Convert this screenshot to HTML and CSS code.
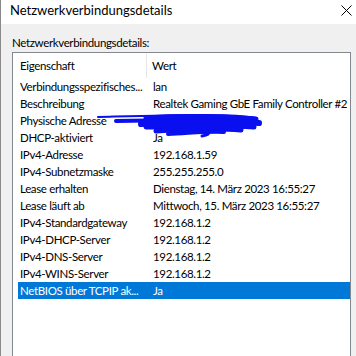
FILE: index.html
```html
<!DOCTYPE html>
<html lang="de">
<head>
<meta charset="UTF-8">
<title>Netzwerkverbindungsdetails</title>
<link rel="stylesheet" href="styles.css">
</head>
<body>
<div class="window">
    <div class="titlebar">
        <span class="title">Netzwerkverbindungsdetails</span>
        <svg class="close" width="11" height="11" viewBox="0 0 11 11">
            <path d="M0.5 0.5 L10.5 10.5 M10.5 0.5 L0.5 10.5" stroke="#000" stroke-width="1" fill="none"/>
        </svg>
    </div>

    <div class="content">
        <div class="label">Netzwerkverbindungsdetails:</div>

        <div class="listview">
            <div class="header">
                <div class="col1">Eigenschaft</div>
                <div class="col2">Wert</div>
            </div>
            <div class="row"><div class="col1">Verbindungsspezifisches...</div><div class="col2">lan</div></div>
            <div class="row"><div class="col1">Beschreibung</div><div class="col2">Realtek Gaming GbE Family Controller #2</div></div>
            <div class="row"><div class="col1">Physische Adresse</div><div class="col2">00-00-00-00-00-00</div></div>
            <div class="row"><div class="col1">DHCP-aktiviert</div><div class="col2">Ja</div></div>
            <div class="row"><div class="col1">IPv4-Adresse</div><div class="col2">192.168.1.59</div></div>
            <div class="row"><div class="col1">IPv4-Subnetzmaske</div><div class="col2">255.255.255.0</div></div>
            <div class="row"><div class="col1">Lease erhalten</div><div class="col2">Dienstag, 14. März 2023 16:55:27</div></div>
            <div class="row"><div class="col1">Lease läuft ab</div><div class="col2">Mittwoch, 15. März 2023 16:55:27</div></div>
            <div class="row"><div class="col1">IPv4-Standardgateway</div><div class="col2">192.168.1.2</div></div>
            <div class="row"><div class="col1">IPv4-DHCP-Server</div><div class="col2">192.168.1.2</div></div>
            <div class="row"><div class="col1">IPv4-DNS-Server</div><div class="col2">192.168.1.2</div></div>
            <div class="row"><div class="col1">IPv4-WINS-Server</div><div class="col2">192.168.1.2</div></div>
            <div class="row selected"><div class="col1">NetBIOS über TCPIP ak...</div><div class="col2">Ja</div></div>

            <!-- scribble that hides the MAC address -->
            <svg class="scribble" width="170" height="26" viewBox="0 0 170 26">
                <g stroke="#0a0ff0" fill="none" stroke-linecap="round" stroke-linejoin="round">
                    <path d="M2 4 C40 3 70 2 110 2 C130 2 150 3 160 5" stroke-width="2"/>
                    <path d="M50 5 C80 3 120 3 160 6" stroke-width="5"/>
                    <path d="M20 8 C60 7 100 6 158 9" stroke-width="4"/>
                    <path d="M45 11 C90 9 125 8 163 10" stroke-width="6"/>
                    <path d="M50 14 C95 13 125 12 158 14" stroke-width="5"/>
                    <path d="M60 18 C95 16 118 15 145 17" stroke-width="5"/>
                    <path d="M72 21 C95 20 112 18 128 19" stroke-width="4"/>
                    <path d="M100 12 C112 18 118 21 106 23" stroke-width="3"/>
                </g>
            </svg>
        </div>
    </div>
</div>
</body>
</html>
```

FILE: styles.css
```css
body {
    margin: 0;
    padding: 0;
    font-family: Lato, "Liberation Sans", sans-serif;
    font-size: 11.5px;
    letter-spacing: -0.35px;
    color: #000;
    background-color: #f0f0f0;
    overflow: hidden;
}

.window {
    height: 356px;
    border-left: 1px solid #8a8a8a;
}

.titlebar {
    height: 24px;
    background-color: #fff;
    display: flex;
    align-items: center;
    justify-content: space-between;
    padding: 0 4px 4px 9px;
    box-sizing: border-box;
}

.title {
    font-size: 13px;
    letter-spacing: 0;
}

.content {
    padding: 10px 0 0 11px;
}

.label {
    height: 18px;
    line-height: 18px;
}

.listview {
    position: relative;
    width: 339px;
    height: 320px;
    box-sizing: border-box;
    border: 1px solid #828790;
    background-color: #fff;
    padding: 0 0 0 5px;
}

.header {
    display: flex;
    height: 25px;
    align-items: center;
}

.row {
    display: flex;
    height: 17px;
    align-items: center;
}

.col1 {
    flex: none;
    width: 129px;
    padding-left: 2px;
    box-sizing: border-box;
    white-space: nowrap;
    overflow: hidden;
}

.col2 {
    flex: none;
    padding-left: 6px;
    white-space: nowrap;
}

.header .col1 {
    border-right: 1px solid #e5e5e5;
    height: 24px;
    line-height: 24px;
}

.header .col2 {
    padding-left: 5px;
}

.selected {
    background-color: #0078d7;
    color: #fff;
}

.scribble {
    position: absolute;
    left: 83px;
    top: 60px;
}
```
